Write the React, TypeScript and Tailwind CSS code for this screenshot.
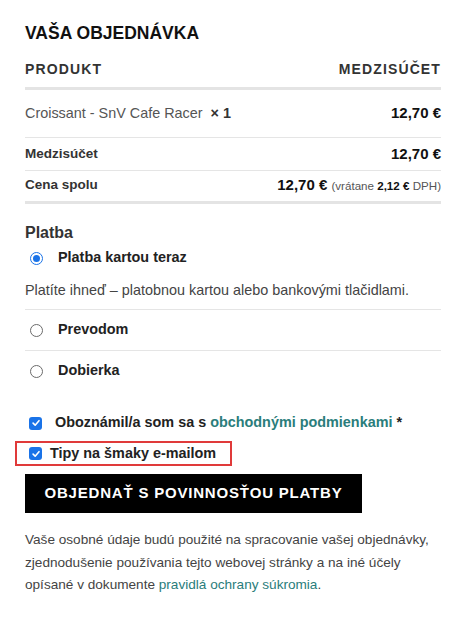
import React from 'react';

function Radio({ checked }: { checked?: boolean }) {
  return checked ? (
    <span className="flex h-[13px] w-[13px] items-center justify-center rounded-full border-[1.5px] border-[#1a73e8] bg-white">
      <span className="h-[7px] w-[7px] rounded-full bg-[#1a73e8]" />
    </span>
  ) : (
    <span className="block h-[13px] w-[13px] rounded-full border border-[#6b6b6b] bg-white" />
  );
}

function Check() {
  return (
    <span className="flex h-[13px] w-[13px] items-center justify-center rounded-[3px] bg-[#1a73e8]">
      <svg viewBox="0 0 12 12" className="h-[10px] w-[10px]">
        <path d="M2.5 6.2 L5 8.6 L9.6 3.2" fill="none" stroke="white" strokeWidth="1.9" strokeLinecap="round" strokeLinejoin="round" />
      </svg>
    </span>
  );
}

export default function App() {
  const methods = [
    { id: 'card', label: 'Platba kartou teraz', checked: true },
    { id: 'transfer', label: 'Prevodom' },
    { id: 'cod', label: 'Dobierka' },
  ];

  return (
    <div className="min-h-[623px] bg-white text-[#222] font-['Liberation_Sans',Arial,sans-serif]">
      <div className="px-[25px] pt-[22px]">
        {/* Order summary */}
        <h3 className="text-[17.5px] font-bold leading-[22px] text-[#111]">VAŠA OBJEDNÁVKA</h3>

        <div className="mt-[15px] flex justify-between border-b-[3px] border-[#e4e4e4] pb-[7px] text-[14px] font-bold tracking-[0.08em] text-[#333]">
          <span>PRODUKT</span>
          <span>MEDZISÚČET</span>
        </div>

        <div className="flex h-[48px] items-center justify-between border-b border-[#e5e5e5] text-[14.4px]">
          <span className="text-[#555]">
            Croissant - SnV Cafe Racer&nbsp; <strong className="font-bold text-[#333]">× 1</strong>
          </span>
          <span className="text-[15px] font-bold text-[#111]">12,70 €</span>
        </div>

        <div className="flex h-[33px] items-center justify-between border-b border-[#e5e5e5]">
          <span className="text-[13.5px] font-bold text-[#333]">Medzisúčet</span>
          <span className="text-[15px] font-bold text-[#111]">12,70 €</span>
        </div>

        <div className="flex h-[33px] items-center justify-between border-b-[3px] border-[#e4e4e4] pb-[1px]">
          <span className="text-[13.5px] font-bold text-[#333]">Cena spolu</span>
          <span className="text-[15px] font-bold text-[#111]">
            12,70 €{' '}
            <small className="text-[11.6px] font-normal text-[#555]">
              (vrátane <span className="font-bold text-[#111]">2,12 €</span> DPH)
            </small>
          </span>
        </div>

        {/* Payment */}
        <h4 className="mt-[19px] text-[16px] font-bold leading-[20px] text-[#333]">Platba</h4>

        <ul>
          {methods.map((m, i) => (
            <li key={m.id} className={i > 0 ? 'border-t border-[#e5e5e5]' : ''}>
              <div className={`flex items-center pl-[5px] ${m.checked ? 'h-[30px]' : 'h-[40px]'}`}>
                <span className="w-[28px] shrink-0">
                  <Radio checked={m.checked} />
                </span>
                <span className="text-[14.4px] font-bold text-[#222]">{m.label}</span>
              </div>
              {m.checked && (
                <p className="pb-[9px] pt-[7px] text-[14.4px] leading-[20px] text-[#444]">
                  Platíte ihneď – platobnou kartou alebo bankovými tlačidlami.
                </p>
              )}
            </li>
          ))}
        </ul>

        {/* Terms */}
        <div className="mt-[22px] flex h-[20px] items-center pl-[4px] text-[14.4px] font-bold text-[#222]">
          <span className="w-[26px] shrink-0">
            <Check />
          </span>
          <span>
            Oboznámil/a som sa s <a className="text-[#2a7d7b]">obchodnými podmienkami</a> *
          </span>
        </div>

        <div className="-ml-[10px] mt-[8px] flex h-[25px] w-[217px] items-center border-2 border-[#e03a3a] pl-[12px] text-[14.4px] font-bold text-[#222]">
          <span className="w-[21px] shrink-0">
            <Check />
          </span>
          <span>Tipy na šmaky e-mailom</span>
        </div>

        <button className="mt-[8px] flex h-[39px] w-[337px] items-center justify-center bg-black text-[15px] font-bold tracking-[0.8px] text-white">
          OBJEDNAŤ S POVINNOSŤOU PLATBY
        </button>

        <p className="mt-[16px] text-[13.6px] leading-[22.5px] text-[#444]">
          Vaše osobné údaje budú použité na spracovanie vašej objednávky, zjednodušenie používania tejto webovej stránky a na iné účely opísané v dokumente <span className="text-[#2a7d7b]">pravidlá ochrany súkromia</span>.
        </p>
      </div>
    </div>
  );
}
